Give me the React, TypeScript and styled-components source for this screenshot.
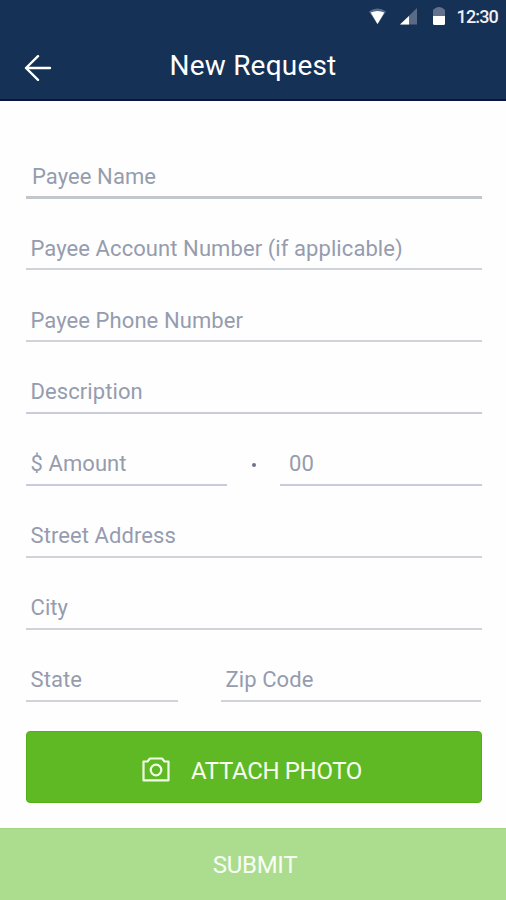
import React from "react";
import styled, { createGlobalStyle } from "styled-components";

const GlobalStyle = createGlobalStyle`
  * { box-sizing: border-box; }
  body { margin: 0; background: #fefefe; font-family: Roboto, "Liberation Sans", sans-serif; }
`;

const Screen = styled.div`
  width: 506px;
  height: 900px;
  display: flex;
  flex-direction: column;
  overflow: hidden;
  background: #fefefe;
`;

const Header = styled.header`
  height: 101px;
  flex: none;
  background: #163156;
  border-bottom: 2px solid #0c1440;
  color: #fff;
`;

const StatusBar = styled.div`
  height: 34px;
  display: flex;
  justify-content: flex-end;
  align-items: center;
  padding-right: 8px;
`;

const StatusIcons = styled.svg`
  width: 80px;
  height: 20px;
  margin-right: 8px;
`;

const Clock = styled.span`
  font-size: 18px;
  line-height: 34px;
  font-weight: 500;
  letter-spacing: -0.85px;
  color: #eef0f6;
`;

const TitleBar = styled.div`
  height: 65px;
  display: grid;
  grid-template-columns: 76px 1fr 76px;
  align-items: center;
`;

const BackButton = styled.button`
  display: flex;
  padding: 2px 0 0 24px;
  border: 0;
  background: none;
  color: inherit;
`;

const Title = styled.h1`
  margin: 0;
  padding-bottom: 2px;
  text-align: center;
  font-size: 28px;
  line-height: 62px;
  font-weight: 400;
  letter-spacing: 0.2px;
`;

const Form = styled.form`
  flex: none;
  padding: 26px 24px 0 26px;
`;

const Row = styled.div<{ $columns?: string; $gap?: number }>`
  display: grid;
  grid-template-columns: ${(p) => p.$columns ?? "1fr"};
  column-gap: ${(p) => p.$gap ?? 0}px;
`;

const Field = styled.label<{
  $tone?: string;
  $inset?: number;
  $strong?: boolean;
  $height?: number;
  $drop?: number;
}>`
  height: ${(p) => p.$height ?? 72}px;
  display: flex;
  align-items: flex-end;
  padding: 0 0 ${(p) => p.$drop ?? 7}px ${(p) => p.$inset ?? 4.5}px;
  border-bottom: ${(p) => (p.$strong ? 3 : 2)}px solid ${(p) => p.$tone ?? "#d0d3d9"};
  font-size: 22px;
  line-height: 26px;
  letter-spacing: 0.08px;
  font-weight: 400;
  color: #959cae;
  white-space: nowrap;
`;

const DecimalPoint = styled.span`
  width: 4px;
  height: 4px;
  margin: 49px auto 0;
  border-radius: 50%;
  background: #6e7487;
`;

const AttachButton = styled.button`
  display: flex;
  align-items: center;
  width: 456px;
  height: 72px;
  margin: 29px 0 0;
  padding: 8px 0 0 115px;
  border: 1px solid #54b016;
  border-radius: 4px;
  background: #5fb924;
  color: #f6fff0;
  font: 400 24px/28px Roboto, "Liberation Sans", sans-serif;
  letter-spacing: -0.35px;

  svg {
    flex: none;
    margin: 0 21px 3px 0;
  }
`;

const SubmitButton = styled.button`
  height: 72px;
  flex: none;
  margin-top: auto;
  padding: 1px 0 0 4px;
  border: 0;
  border-top: 1px solid #a2d684;
  background: #acdc8e;
  color: #f8fff4;
  font: 400 24px/28px Roboto, "Liberation Sans", sans-serif;
  letter-spacing: -0.3px;
`;

const lavender = "#c9cbdc";

export default function App() {
  return (
    <Screen>
      <GlobalStyle />
      <Header>
        <StatusBar>
          <StatusIcons viewBox="0 0 80 20">
            <path d="M0 4.5Q8.5-1.5 17 4.5L8.5 17.5z" fill="#5a6b88" />
            <path d="M1.7 5.5Q8.5 2.5 15.3 5.5L8.5 17z" fill="#fff" />
            <path d="M31 17.5H48V1z" fill="#5a6b88" />
            <path d="M31 17.5H40V9z" fill="#fff" />
            <path d="M64 9V4Q64 2 66 1.600Q67 0 70 0Q73 0 74 1.600Q76 2 76 4V9z" fill="#63718d" />
            <path d="M64 9H76V16.5Q76 18 74.5 18H65.5Q64 18 64 16.5z" fill="#fff" />
          </StatusIcons>
          <Clock>12:30</Clock>
        </StatusBar>
        <TitleBar>
          <BackButton type="button" aria-label="Back">
            <svg width="28" height="26" viewBox="0 0 28 26" fill="none" stroke="#fff" strokeWidth="2.4" strokeLinecap="round" strokeLinejoin="round">
              <path d="M26 13H2M14 1.2L2 13L14 24.8" />
            </svg>
          </BackButton>
          <Title>New Request</Title>
        </TitleBar>
      </Header>
      <Form>
        <Field $inset={6} $strong $drop={6} $tone="#c3c6cb">Payee Name</Field>
        <Row>
          <Field $height={71} $drop={6}>Payee Account Number (if applicable)</Field>
        </Row>
        <Row>
          <Field $drop={6}>Payee Phone Number</Field>
        </Row>
        <Row>
          <Field $tone={lavender}>Description</Field>
        </Row>
        <Row $columns="201px 53px 202px">
          <Field $tone={lavender}>$ Amount</Field>
          <DecimalPoint />
          <Field $tone={lavender} $inset={9}>00</Field>
        </Row>
        <Row>
          <Field>Street Address</Field>
        </Row>
        <Row>
          <Field>City</Field>
        </Row>
        <Row $columns="152px 260px" $gap={43}>
          <Field>State</Field>
          <Field>Zip Code</Field>
        </Row>
        <AttachButton type="button">
          <svg width="28" height="25" viewBox="0 0 28 25" fill="none" stroke="#effde6" strokeWidth="2.2" strokeLinejoin="round">
            <path d="M1.5 4.5H5.5L8 1.5H20L22.5 4.5H26.5V23.3H1.5z" />
            <circle cx="14" cy="13" r="5.3" />
          </svg>
          ATTACH PHOTO
        </AttachButton>
      </Form>
      <SubmitButton type="button">SUBMIT</SubmitButton>
    </Screen>
  );
}
